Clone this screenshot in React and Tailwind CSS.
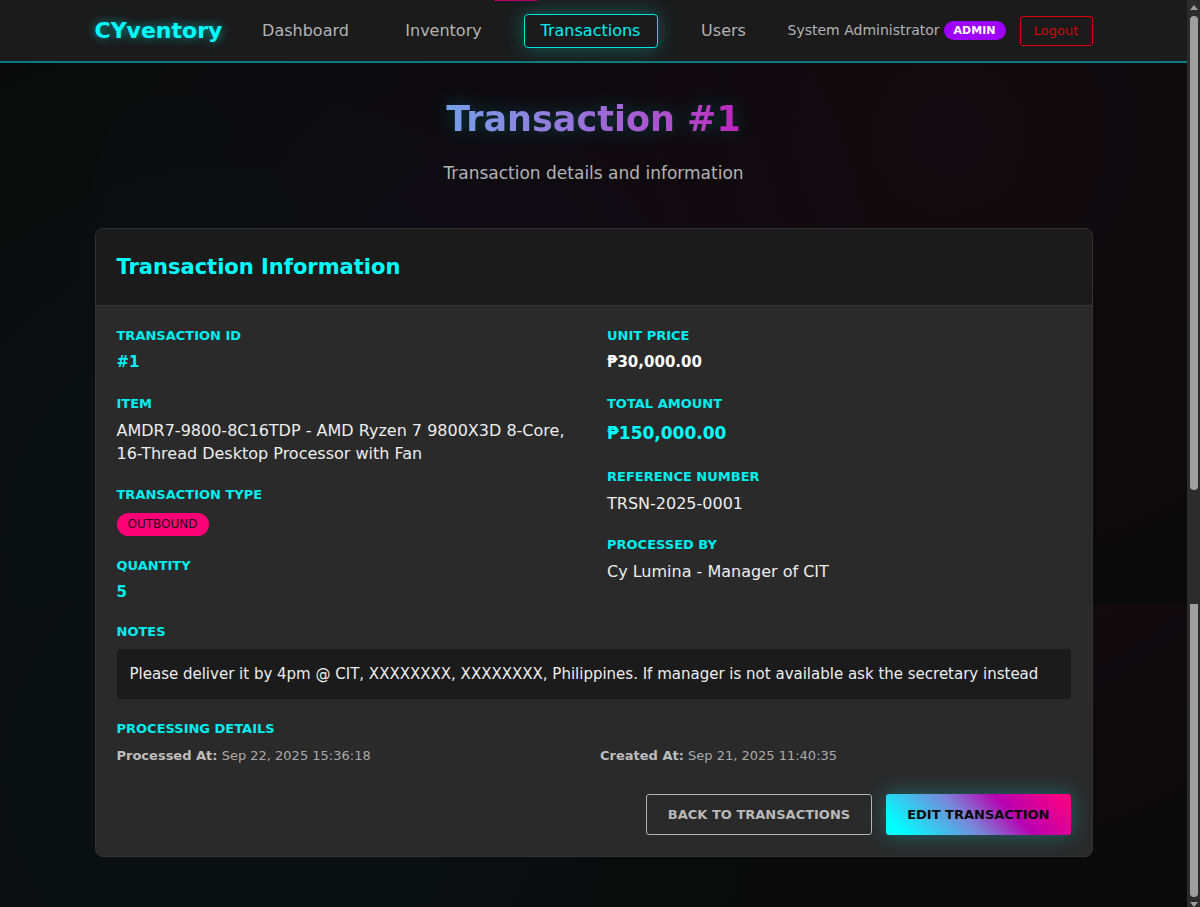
import React from "react";

const links = [
  { label: "Dashboard", href: "#dashboard", width: "w-[116px]" },
  { label: "Inventory", href: "#inventory", width: "w-[106px]" },
  { label: "Transactions", href: "#transactions", width: "w-[134px]", active: true },
  { label: "Users", href: "#users", width: "w-[78px]" },
];

function NavBar() {
  return (
    <header className="border-b-2 border-[#0c7b7d] bg-[#1b1b1b]">
      <div className="mx-auto flex h-[61px] w-full max-w-[998px] items-center">
        <a
          href="#home"
          className="w-[153px] shrink-0 text-[22px] font-bold text-[#00ffff] [text-shadow:0_0_10px_rgba(0,255,255,0.6)]"
        >
          CYventory
        </a>
        <nav aria-label="Main" className="shrink-0">
          <ul className="flex gap-[27px]">
            {links.map((l) => (
              <li key={l.label}>
                <a
                  href={l.href}
                  aria-current={l.active ? "page" : undefined}
                  className={
                    "flex h-[34px] items-center justify-center rounded-[4px] border text-[16px] " +
                    l.width +
                    (l.active
                      ? " border-[#00e5e5] text-[#00f0f0] shadow-[0_0_20px_rgba(0,255,255,0.3)]"
                      : " border-transparent text-[#b3b3b3]")
                  }
                >
                  {l.label}
                </a>
              </li>
            ))}
          </ul>
        </nav>
        <div className="ml-auto flex shrink-0 items-center">
          <span className="text-[14px] text-[#b3b3b3]">System Administrator</span>
          <span className="ml-1 rounded-full bg-[#9d00ff] px-[10px] text-[11px] leading-[19px] font-bold text-white">
            ADMIN
          </span>
          <button
            type="button"
            className="ml-[14px] h-[30px] w-[73px] rounded-[3px] border border-[#d8000c] text-[13px] text-[#d8000c]"
          >
            Logout
          </button>
        </div>
      </div>
    </header>
  );
}

function Field({ label, children }) {
  return (
    <div>
      <dt className="text-[13px] leading-5 font-bold text-[#00eeee] uppercase">{label}</dt>
      <dd className="mt-[5px] text-[16px] leading-[23px] text-[#ededed]">{children}</dd>
    </div>
  );
}

function TransactionCard() {
  return (
    <section className="mt-[43px] rounded-[8px] border border-[#323232] bg-[#2a2a2a]">
      <div className="rounded-t-[7px] border-b border-[#353535] bg-[#1b1b1b] px-[21px] py-6">
        <h2 className="text-[21px] leading-7 font-bold text-[#00ffff]">Transaction Information</h2>
      </div>
      <div className="px-[21px] pt-5 pb-[21px]">
        <div className="grid grid-cols-2 gap-[27px]">
          <dl className="flex flex-col gap-5">
            <Field label="Transaction ID">
              <strong className="block text-[15px] text-[#00f0f0]">#1</strong>
            </Field>
            <Field label="Item">
              AMDR7-9800-8C16TDP - AMD Ryzen 7 9800X3D 8-Core,{" "}
              <span className="whitespace-nowrap">16-Thread</span> Desktop Processor with Fan
            </Field>
            <Field label="Transaction Type">
              <span className="flex pt-[3px]">
                <span className="rounded-full bg-[#ff0077] px-[11px] text-[12px] leading-[23px] text-[#2a0a18]">
                  OUTBOUND
                </span>
              </span>
            </Field>
            <Field label="Quantity">
              <strong className="block text-[15px] text-[#00f0f0]">5</strong>
            </Field>
          </dl>
          <dl className="flex flex-col gap-5">
            <Field label="Unit Price">
              <strong className="block text-[15px] text-white">₱30,000.00</strong>
            </Field>
            <Field label="Total Amount">
              <strong className="block text-[17px] leading-7 text-[#00ffff]">₱150,000.00</strong>
            </Field>
            <Field label="Reference Number">TRSN-2025-0001</Field>
            <Field label="Processed By">Cy Lumina - Manager of CIT</Field>
          </dl>
        </div>

        <h3 className="mt-[18px] text-[13px] leading-5 font-bold text-[#00eeee] uppercase">Notes</h3>
        <p className="mt-[7px] rounded-[4px] bg-[#1b1b1b] p-[13px] text-[15px] leading-6 text-[#ededed]">
          Please deliver it by 4pm @ CIT, XXXXXXXX, XXXXXXXX, Philippines. If manager is not available ask the secretary
          instead
        </p>

        <h3 className="mt-5 text-[13px] leading-5 font-bold text-[#00eeee] uppercase">Processing Details</h3>
        <div className="mt-[5px] grid grid-cols-2 gap-[13px] text-[13px] leading-[23px] text-[#aaaaaa]">
          <p>
            <strong className="text-[#bdbdbd]">Processed At:</strong> Sep 22, 2025 15:36:18
          </p>
          <p>
            <strong className="text-[#bdbdbd]">Created At:</strong> Sep 21, 2025 11:40:35
          </p>
        </div>

        <div className="mt-[27px] flex justify-end gap-[14px]">
          <a
            href="#transactions"
            className="flex h-[41px] items-center rounded-[3px] border border-[#b3b3b3] px-[21px] text-[13px] font-bold text-[#b9b9b9]"
          >
            BACK TO TRANSACTIONS
          </a>
          <button
            type="button"
            className="h-[41px] rounded-[3px] bg-[linear-gradient(45deg,#00ffff_8%,#7a85d8_43%,#b800b0_66%,#ff0080_97%)] px-[21px] text-[13px] font-bold text-[#0a0a0a] shadow-[0_0_20px_rgba(0,255,255,0.3)]"
          >
            EDIT TRANSACTION
          </button>
        </div>
      </div>
    </section>
  );
}

function Backdrop() {
  return (
    <div aria-hidden="true" className="absolute inset-0 flex flex-col">
      <div className="h-[604px] shrink-0 bg-[radial-gradient(circle_560px_at_20%_544px,rgba(0,255,255,0.03),transparent),radial-gradient(circle_548px_at_80%_135px,rgba(255,0,128,0.03),transparent),radial-gradient(circle_420px_at_40%_272px,rgba(157,0,255,0.03),transparent)]" />
      <div className="grow bg-[radial-gradient(circle_560px_at_20%_167px,rgba(0,255,255,0.03),transparent),radial-gradient(circle_548px_at_80%_-242px,rgba(255,0,128,0.06),transparent)]" />
    </div>
  );
}

function ScrollTrack() {
  return (
    <div aria-hidden="true" className="flex w-[13px] shrink-0 flex-col items-center bg-[#2c2c2c]">
      <svg width="8" height="16" viewBox="0 0 8 16" className="shrink-0">
        <path d="M4 5 8 10H0z" fill="#9f9f9f" />
      </svg>
      <div className="w-2 grow-[474] rounded-full bg-[#9f9f9f]" />
      <div className="grow-[114]" />
      <div className="w-2 grow-[293] rounded-b-full bg-[#9f9f9f]" />
      <svg width="8" height="10" viewBox="0 0 8 10" className="shrink-0">
        <path d="M0 5h8L4 10z" fill="#9f9f9f" />
      </svg>
    </div>
  );
}

export default function App() {
  return (
    <div className="relative flex min-h-screen bg-[#0a0a0a] font-['DejaVu_Sans',sans-serif]">
      <div
        aria-hidden="true"
        className="absolute top-0 left-[494px] z-10 h-px w-[43px] bg-[#b5006b]"
      />
      <div className="relative min-w-0 flex-1">
        <Backdrop />
        <div className="relative">
          <NavBar />
          <main className="mx-auto w-full max-w-[998px] pt-[34px] pb-12">
            <div className="text-center">
              <h1 className="text-[35px] leading-[44px] font-bold drop-shadow-[0_0_9px_rgba(0,255,255,0.22)]">
                <span className="bg-linear-to-r from-[#72a0ea] via-[#9a6dd8] to-[#bd20bf] bg-clip-text text-transparent">
                  Transaction #1
                </span>
              </h1>
              <p className="mt-5 text-[17px] leading-6 text-[#b3b3b3]">Transaction details and information</p>
            </div>
            <TransactionCard />
          </main>
        </div>
      </div>
      <ScrollTrack />
    </div>
  );
}
